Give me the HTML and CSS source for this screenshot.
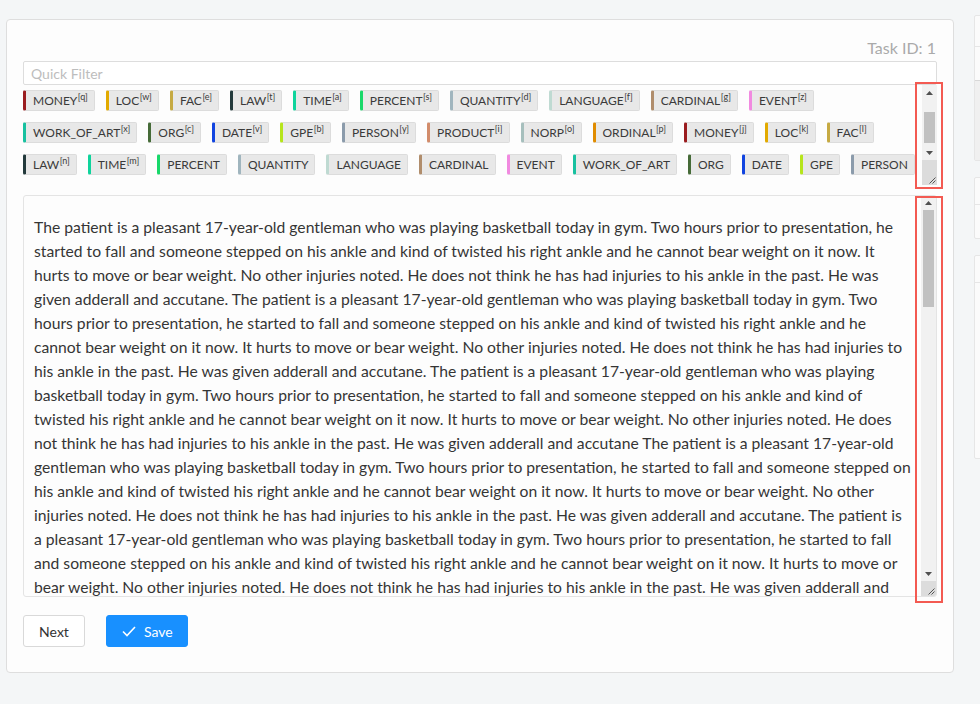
FILE: index.html
```html
<!DOCTYPE html>
<html>
<head>
<meta charset="utf-8">
<link rel="stylesheet" href="styles.css">
</head>
<body>
<div class="page">
  <div class="card">
    <div class="task-id">Task ID: 1</div>
    <input class="quick-filter" type="text" placeholder="Quick Filter">
    <div class="tags-wrap">
      <div class="tags">
        <div class="tags-content">
          <div class="tag-row">
            <span class="tag c-money">MONEY<sup>[q]</sup></span>
            <span class="tag c-loc">LOC<sup>[w]</sup></span>
            <span class="tag c-fac">FAC<sup>[e]</sup></span>
            <span class="tag c-law">LAW<sup>[t]</sup></span>
            <span class="tag c-time">TIME<sup>[a]</sup></span>
            <span class="tag c-percent">PERCENT<sup>[s]</sup></span>
            <span class="tag c-quantity">QUANTITY<sup>[d]</sup></span>
            <span class="tag c-language">LANGUAGE<sup>[f]</sup></span>
            <span class="tag c-cardinal">CARDINAL<sup>[g]</sup></span>
            <span class="tag c-event">EVENT<sup>[z]</sup></span>
          </div>
          <div class="tag-row">
            <span class="tag c-work">WORK_OF_ART<sup>[x]</sup></span>
            <span class="tag c-org">ORG<sup>[c]</sup></span>
            <span class="tag c-date">DATE<sup>[v]</sup></span>
            <span class="tag c-gpe">GPE<sup>[b]</sup></span>
            <span class="tag c-person">PERSON<sup>[y]</sup></span>
            <span class="tag c-product">PRODUCT<sup>[i]</sup></span>
            <span class="tag c-norp">NORP<sup>[o]</sup></span>
            <span class="tag c-ordinal">ORDINAL<sup>[p]</sup></span>
            <span class="tag c-money">MONEY<sup>[j]</sup></span>
            <span class="tag c-loc">LOC<sup>[k]</sup></span>
            <span class="tag c-fac">FAC<sup>[l]</sup></span>
          </div>
          <div class="tag-row">
            <span class="tag c-law">LAW<sup>[n]</sup></span>
            <span class="tag c-time">TIME<sup>[m]</sup></span>
            <span class="tag c-percent">PERCENT</span>
            <span class="tag c-quantity">QUANTITY</span>
            <span class="tag c-language">LANGUAGE</span>
            <span class="tag c-cardinal">CARDINAL</span>
            <span class="tag c-event">EVENT</span>
            <span class="tag c-work">WORK_OF_ART</span>
            <span class="tag c-org">ORG</span>
            <span class="tag c-date">DATE</span>
            <span class="tag c-gpe">GPE</span>
            <span class="tag c-person">PERSON</span>
          </div>
        </div>
        <div class="vscroll sb-tags">
          <div class="sb-btn sb-up"></div>
          <div class="sb-track"><div class="sb-thumb"></div></div>
          <div class="sb-btn sb-down"></div>
          <div class="sb-resizer"></div>
        </div>
      </div>
      <div class="highlight hl-tags"></div>
    </div>
    <div class="text-wrap">
      <div class="text-box">
        <div class="text-content">The patient is a pleasant 17-year-old gentleman who was playing basketball today in gym. Two hours prior to presentation, he started to fall and someone stepped on his ankle and kind of twisted his right ankle and he cannot bear weight on it now. It hurts to move or bear weight. No other injuries noted. He does not think he has had injuries to his ankle in the past. He was given adderall and accutane. The patient is a pleasant 17-year-old gentleman who was playing basketball today in gym. Two hours prior to presentation, he started to fall and someone stepped on his ankle and kind of twisted his right ankle and he cannot bear weight on it now. It hurts to move or bear weight. No other injuries noted. He does not think he has had injuries to his ankle in the past. He was given adderall and accutane. The patient is a pleasant 17-year-old gentleman who was playing basketball today in gym. Two hours prior to presentation, he started to fall and someone stepped on his ankle and kind of twisted his right ankle and he cannot bear weight on it now. It hurts to move or bear weight. No other injuries noted. He does not think he has had injuries to his ankle in the past. He was given adderall and accutane The patient is a pleasant 17-year-old gentleman who was playing basketball today in gym. Two hours prior to presentation, he started to fall and someone stepped on his ankle and kind of twisted his right ankle and he cannot bear weight on it now. It hurts to move or bear weight. No other injuries noted. He does not think he has had injuries to his ankle in the past. He was given adderall and accutane. The patient is a pleasant 17-year-old gentleman who was playing basketball today in gym. Two hours prior to presentation, he started to fall and someone stepped on his ankle and kind of twisted his right ankle and he cannot bear weight on it now. It hurts to move or bear weight. No other injuries noted. He does not think he has had injuries to his ankle in the past. He was given adderall and accutane.</div>
        <div class="vscroll sb-text">
          <div class="sb-btn sb-up"></div>
          <div class="sb-track"><div class="sb-thumb"></div></div>
          <div class="sb-btn sb-down"></div>
          <div class="sb-resizer"></div>
        </div>
      </div>
      <div class="highlight hl-text"></div>
    </div>
    <div class="actions">
      <button class="btn btn-next" type="button">Next</button>
      <button class="btn btn-save" type="button"><svg class="check" width="14" height="11" viewBox="0 0 14 11"><path d="M1 5.5 L5 9.5 L13 1" fill="none" stroke="#fff" stroke-width="1.6"/></svg><span>Save</span></button>
    </div>
  </div>
  <div class="side">
    <div class="side-box">
      <div class="side-sec s1"></div>
      <div class="side-sec s2"></div>
      <div class="side-sec s3"></div>
    </div>
    <div class="side-box">
      <div class="side-sec s4"></div>
      <div class="side-sec s5"></div>
    </div>
    <div class="side-box">
      <div class="side-sec s4"></div>
      <div class="side-sec s6"></div>
    </div>
  </div>
</div>
</body>
</html>
```
FILE: styles.css
```css
html, body {
  margin: 0;
  padding: 0;
  overflow: hidden;
  height: 100%;
}
body {
  background: #f4f6f7;
  font-family: Lato, "Noto Sans", sans-serif;
  color: #333;
}
.page {
  display: flex;
  align-items: flex-start;
  gap: 20px;
  padding: 19px 0 0 6px;
  width: 1200px;
}
.card {
  box-sizing: border-box;
  width: 948px;
  flex: none;
  background: #fdfdfd;
  border: 1px solid #dedede;
  border-radius: 4px;
  padding: 17px 16px 25px 16px;
  display: flex;
  flex-direction: column;
}
.task-id {
  text-align: right;
  font-size: 16px;
  line-height: 22px;
  color: #aaa;
  margin-bottom: 2px;
  padding-right: 1px;
}
.quick-filter {
  box-sizing: border-box;
  height: 24px;
  width: 100%;
  border: 1px solid #dddddd;
  border-radius: 2px;
  padding: 0 7px;
  margin: 0;
  font-family: Lato, sans-serif;
  font-size: 14px;
  color: #333;
  background: #fff;
  outline: none;
}
.quick-filter::placeholder {
  color: #bdbdbd;
}

/* drawn scrollbars */
.vscroll {
  flex: none;
  width: 15px;
  display: flex;
  flex-direction: column;
  background: #f1f1f1;
}
.sb-btn {
  flex: none;
  height: 14px;
  background-repeat: no-repeat;
  background-position: center;
}
.sb-up {
  background-image: url("data:image/svg+xml;utf8,<svg xmlns='http://www.w3.org/2000/svg' width='7' height='4'><path d='M0 4 L3.5 0 L7 4Z' fill='%23505050'/></svg>");
}
.sb-down {
  background-image: url("data:image/svg+xml;utf8,<svg xmlns='http://www.w3.org/2000/svg' width='7' height='4'><path d='M0 0 L3.5 4 L7 0Z' fill='%23505050'/></svg>");
}
.sb-track {
  flex: 1;
  display: flex;
  flex-direction: column;
  padding: 0 2px;
}
.sb-thumb {
  background: #c1c1c1;
}
.sb-resizer {
  flex: none;
  height: 15px;
  background: #dcdcdc url("data:image/svg+xml;utf8,<svg xmlns='http://www.w3.org/2000/svg' width='15' height='15'><path d='M13.5 7.5 L7.5 13.5 M13.5 10.5 L10.5 13.5' stroke='%23555' stroke-width='1'/></svg>") no-repeat right bottom;
}
.sb-tags .sb-btn { height: 15px; }
.sb-tags .sb-thumb { margin-top: 12px; height: 31px; }
.sb-tags .sb-resizer { height: 25px; }
.sb-text .sb-thumb { height: 97px; }

.tags-wrap {
  position: relative;
  margin-bottom: 10px;
}
.tags {
  height: 100px;
  display: flex;
}
.tags-content {
  flex: 1;
  min-width: 0;
  overflow: hidden;
  padding-top: 5px;
  display: flex;
  flex-direction: column;
  gap: 11px;
}
.tag-row {
  display: flex;
  gap: 11px;
  white-space: nowrap;
}
.tag {
  box-sizing: border-box;
  flex: none;
  height: 21px;
  display: inline-flex;
  align-items: center;
  background: #e8e8e8;
  border: 1px solid #dcdcdc;
  border-left: 3px solid #999;
  border-radius: 2px;
  padding: 0 6px 0 7px;
  font-size: 12px;
  line-height: 19px;
  color: #3a3a3a;
}
.tag sup {
  font-size: 9px;
  line-height: 0;
  vertical-align: 0;
  position: relative;
  top: -4px;
  margin-left: 0.5px;
}
.c-money { border-left-color: #9a1c1f; }
.c-loc { border-left-color: #e2aa00; }
.c-fac { border-left-color: #c6aa43; }
.c-law { border-left-color: #233a3c; }
.c-time { border-left-color: #0fd49c; }
.c-percent { border-left-color: #18d86a; }
.c-quantity { border-left-color: #a0b5be; }
.c-language { border-left-color: #bfdad2; }
.c-cardinal { border-left-color: #b08d6c; }
.c-event { border-left-color: #f18ae0; }
.c-work { border-left-color: #18c1a0; }
.c-org { border-left-color: #466b38; }
.c-date { border-left-color: #1144e0; }
.c-gpe { border-left-color: #b6e51c; }
.c-person { border-left-color: #8b9bab; }
.c-product { border-left-color: #d28c6b; }
.c-norp { border-left-color: #a6bfbd; }
.c-ordinal { border-left-color: #e08c00; }

.text-wrap {
  position: relative;
  margin-bottom: 18px;
}
.text-box {
  box-sizing: border-box;
  height: 402px;
  display: flex;
  border: 1px solid #e4e4e4;
  border-radius: 3px;
  background: #fdfdfd;
  overflow: hidden;
}
.text-content {
  flex: 1;
  min-width: 0;
  overflow: hidden;
  padding: 19px 10px 0 10px;
  font-size: 15.7px;
  line-height: 24px;
  color: #353535;
}
.highlight {
  position: absolute;
  border: 2px solid #f35a52;
  pointer-events: none;
  box-sizing: border-box;
}
.hl-tags {
  top: -3px;
  right: -6px;
  width: 28px;
  height: 107px;
}
.hl-text {
  top: 1px;
  right: -6px;
  width: 28px;
  height: 407px;
}
.actions {
  display: flex;
  gap: 21px;
}
.btn {
  box-sizing: border-box;
  height: 32px;
  border-radius: 3px;
  font-family: Lato, sans-serif;
  font-size: 14px;
  margin: 0;
  cursor: pointer;
  display: inline-flex;
  align-items: center;
}
.btn-next {
  width: 62px;
  justify-content: center;
  background: #fff;
  border: 1px solid #d9d9d9;
  color: #333;
}
.btn-save {
  width: 82px;
  background: #1890ff;
  border: 1px solid #1890ff;
  color: #fff;
  padding: 0 0 0 15px;
  gap: 8px;
}
.check {
  display: block;
}
.side {
  display: flex;
  flex-direction: column;
  gap: 16px;
  margin-top: -4px;
  width: 200px;
}
.side-box {
  background: #fbfbfb;
  border: 1px solid #e6e6e6;
  border-radius: 2px;
}
.side-sec + .side-sec {
  border-top: 1px solid #e6e6e6;
}
.s1 { height: 30px; }
.s2 { height: 33px; }
.s3 { height: 79px; background: #f0f0f0; border-top-color: #d8d8d8 !important; }
.s4 { height: 26px; }
.s5 { height: 33px; }
.s6 { height: 175px; }
```
